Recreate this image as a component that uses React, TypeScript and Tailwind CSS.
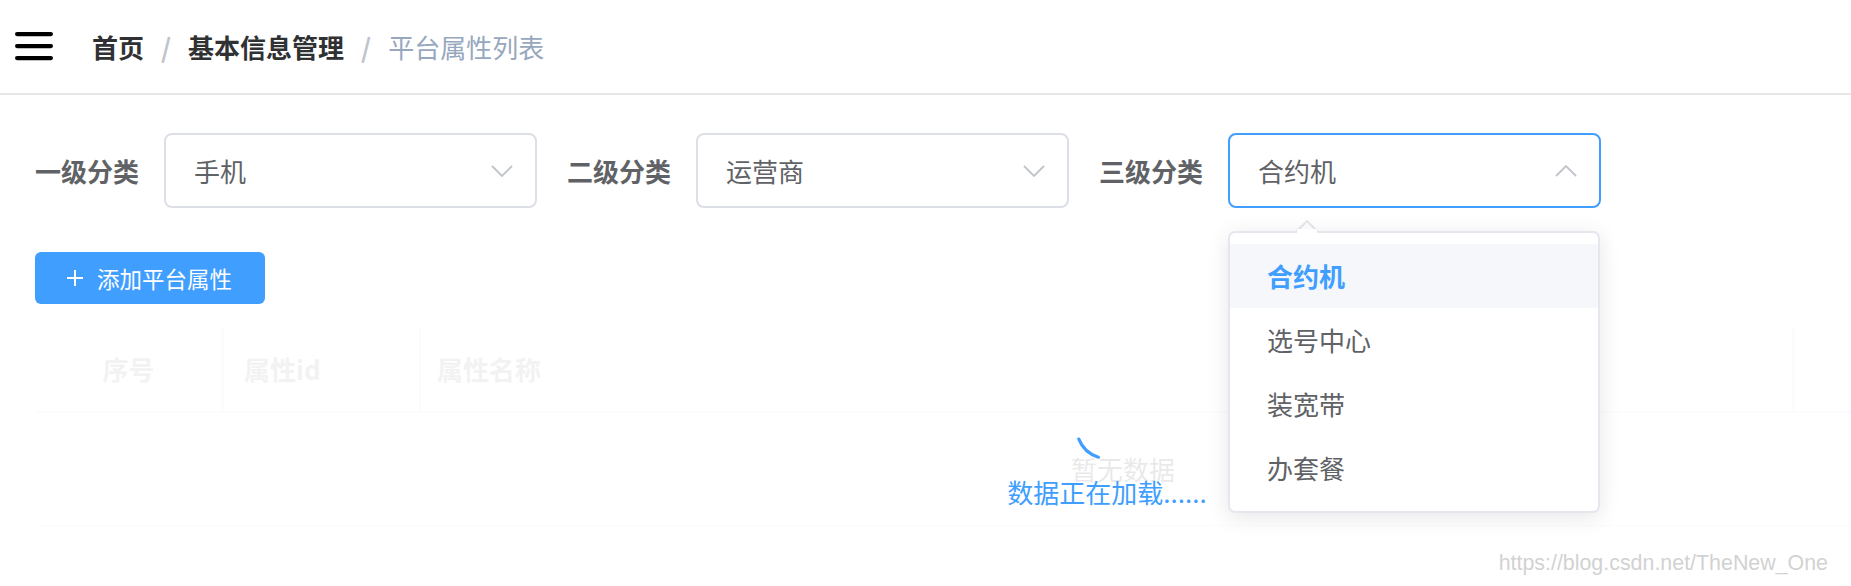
import React from 'react';

const levels = [
  { label: '一级分类', value: '手机', open: false },
  { label: '二级分类', value: '运营商', open: false },
  { label: '三级分类', value: '合约机', open: true },
];

const options = ['合约机', '选号中心', '装宽带', '办套餐'];

const Hamburger: React.FC = () => (
  <svg width="38" height="29" viewBox="0 0 38 29">
    <g stroke="#000" strokeWidth="4.2" strokeLinecap="round">
      <line x1="2.1" y1="2.1" x2="35.9" y2="2.1" />
      <line x1="2.1" y1="14.1" x2="35.9" y2="14.1" />
      <line x1="2.1" y1="26.1" x2="35.9" y2="26.1" />
    </g>
  </svg>
);

const Chevron: React.FC<{ up?: boolean }> = ({ up }) => (
  <svg width="22" height="12" viewBox="0 0 22 12">
    <polyline
      points={up ? '1,11 11,1 21,11' : '1,1 11,11 21,1'}
      fill="none"
      stroke="#c0c4cc"
      strokeWidth="1.8"
    />
  </svg>
);

const App: React.FC = () => {
  return (
    <div className="relative w-[1851px] h-[586px] overflow-hidden bg-white font-['Noto_Sans_CJK_SC','Microsoft_YaHei',sans-serif]">
      {/* navbar */}
      <div className="flex items-center h-[95px] border-b-2 border-[#e6e6e6]">
        <div className="ml-[15px] flex items-center">
          <Hamburger />
        </div>
        <div className="ml-[39px] flex items-center text-[26px] leading-none">
          <span className="font-bold text-[#303133]">首页</span>
          <span className="mx-[17px] text-[#c0c4cc] font-bold">/</span>
          <span className="font-bold text-[#303133]">基本信息管理</span>
          <span className="mx-[17px] text-[#c0c4cc] font-bold">/</span>
          <span className="text-[#97a8be]">平台属性列表</span>
        </div>
      </div>

      <div className="pl-[35px] pt-[38px]">
        {/* category selects */}
        <div className="flex items-center">
          {levels.map((lv) => (
            <div key={lv.label} className="flex items-center mr-[30px]">
              <div className="w-[129px] text-[26px] font-bold text-[#606266] leading-none">{lv.label}</div>
              <div
                className={
                  lv.open
                    ? 'w-[373px] h-[75px] rounded-[8px] border-2 border-[#409eff] flex items-center justify-between pl-[28px] pr-[22px]'
                    : 'w-[373px] h-[75px] rounded-[8px] border-2 border-[#dcdfe6] flex items-center justify-between pl-[28px] pr-[22px]'
                }
              >
                <span className="text-[26px] text-[#606266] leading-none">{lv.value}</span>
                <Chevron up={lv.open} />
              </div>
            </div>
          ))}
        </div>

        <button className="mt-[44px] w-[230px] h-[52px] rounded-[6px] bg-[#409eff] text-white flex items-center pl-[32px]">
          <svg width="16" height="16" viewBox="0 0 16 16">
            <g stroke="#fff" strokeWidth="2">
              <line x1="8" y1="0" x2="8" y2="16" />
              <line x1="0" y1="8" x2="16" y2="8" />
            </g>
          </svg>
          <span className="ml-[14px] text-[22.5px] leading-none">添加平台属性</span>
        </button>

        {/* table with loading mask */}
        <div className="relative mt-[22px] w-[2176px]">
          <div className="flex h-[87px] border-b-2 border-[#ebeef5] text-[26px] font-bold text-[#c0c0c0] leading-none">
            <div className="w-[189px] border-r-2 border-[#ebeef5] flex items-center justify-center">序号</div>
            <div className="w-[197px] border-r-2 border-[#ebeef5] flex items-center pl-[20px]">属性id</div>
            <div className="w-[1373px] border-r-2 border-[#ebeef5] flex items-center pl-[16px]">属性名称</div>
            <div className="flex-1" />
          </div>
          <div className="h-[114px] border-b-2 border-[#f5f6f8] flex items-center justify-center text-[26px] text-[#909399] leading-none">
            暂无数据
          </div>

          <div className="absolute inset-0 bg-white/80">
            <div className="absolute top-1/2 left-0 w-[2144px] mt-[-39px] flex flex-col items-center">
              <svg width="79" height="79" viewBox="0 0 79 79">
                <path
                  d="M 30.4 69.2 A 31 31 0 0 1 10.8 51.1"
                  fill="none"
                  stroke="#409eff"
                  strokeWidth="3.2"
                  strokeLinecap="round"
                />
              </svg>
              <p className="mt-[12px] text-[26px] text-[#409eff] leading-none">数据正在加载......</p>
            </div>
          </div>
        </div>
      </div>

      {/* select dropdown */}
      <svg className="absolute left-[1296px] top-[220px]" width="22" height="13" viewBox="0 0 22 13">
        <polygon points="0,12 11,1 22,12" fill="#fff" />
        <polyline points="0,12 11,1 22,12" fill="none" stroke="#e4e7ed" strokeWidth="2" />
      </svg>
      <div className="absolute left-[1228px] top-[231px] w-[372px] rounded-[7px] border-2 border-[#e4e7ed] bg-white py-[11px] shadow-[0_4px_22px_rgba(0,0,0,0.1)]">
        {options.map((o, i) => (
          <div
            key={o}
            className={
              i === 0
                ? 'h-[64px] px-[37px] flex items-center bg-[#f5f7fa] text-[26px] font-bold text-[#409eff] leading-none'
                : 'h-[64px] px-[37px] flex items-center text-[26px] text-[#606266] leading-none'
            }
          >
            {o}
          </div>
        ))}
      </div>
      <svg className="absolute left-[1297px] top-[229px]" width="20" height="6" viewBox="0 0 20 6">
        <rect width="20" height="6" fill="#fff" />
      </svg>

      <div className="absolute right-[23px] top-[553px] text-[21.4px] leading-none text-[#d2d2d2] font-['Liberation_Sans',sans-serif]">
        https://blog.csdn.net/TheNew_One
      </div>
    </div>
  );
};

export default App;
